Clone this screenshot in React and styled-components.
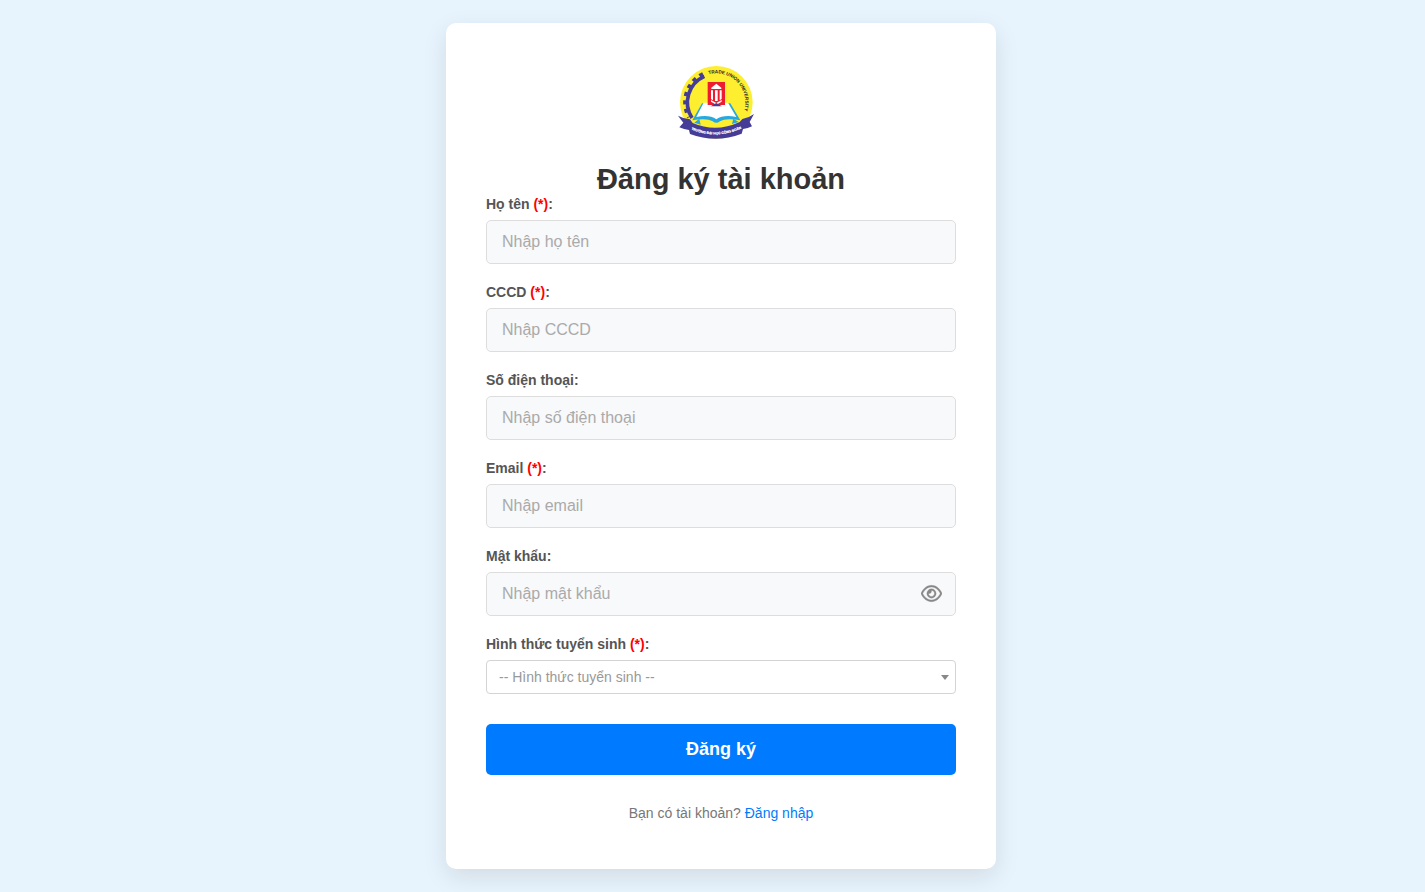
import React, { useState } from "react";
import styled, { createGlobalStyle } from "styled-components";
import { FaRegEye } from "react-icons/fa6";

const GlobalStyle = createGlobalStyle`
  *, *::before, *::after { box-sizing: border-box; }
  body {
    margin: 0;
    background: #e8f4fd;
    font-family: "Liberation Sans", Arial, sans-serif;
  }
  input, select, button { font-family: inherit; }
`;

const Page = styled.main`
  min-height: 100vh;
  display: flex;
  align-items: center;
  justify-content: center;
  padding: 20px 0 20px 17px;
`;

const Card = styled.form`
  width: 100%;
  max-width: 550px;
  padding: 40px 40px 48px;
  background: #fff;
  border-radius: 10px;
  box-shadow: 0 8px 24px rgba(0, 0, 0, 0.1);
`;

const LogoRow = styled.div`
  display: flex;
  justify-content: center;
  padding: 2px 10px 23px 0;
`;

const LogoSvg = styled.svg`
  display: block;
  width: 76px;
  height: 74px;
`;

const Title = styled.h1`
  margin: 0;
  color: #333;
  font-size: 29px;
  line-height: 34px;
  text-align: center;
`;

const Field = styled.div`
  display: flex;
  flex-direction: column;
  gap: 8px;
  margin-bottom: ${(p) => (p.$last ? "30px" : "20px")};
`;

const Label = styled.label`
  color: #555;
  font-size: 14px;
  font-weight: 700;
  line-height: 16px;
`;

const Required = styled.span`
  color: #f00;
`;

const Control = styled.div`
  position: relative;
`;

const Input = styled.input`
  display: block;
  width: 100%;
  height: 44px;
  padding: 0 15px;
  border: 1px solid #ddd;
  border-radius: 5px;
  background: #f8f9fb;
  color: #333;
  font-size: 16px;
  &::placeholder { color: #aaa; opacity: 1; }
`;

const EyeButton = styled.button`
  position: absolute;
  top: 0;
  right: 14px;
  height: 42px;
  padding: 0;
  border: 0;
  background: none;
  color: #888;
  display: flex;
  align-items: center;
  cursor: pointer;
  svg { width: 21px; height: 19px; stroke: currentColor; stroke-width: 8px; }
`;

const Select = styled.select`
  display: block;
  width: 100%;
  height: 34px;
  padding: 0 24px 0 12px;
  appearance: none;
  border: 1px solid #d4d4d4;
  border-radius: 4px;
  background: #fff;
  color: #999;
  font-size: 14px;
`;

const Caret = styled.span`
  position: absolute;
  top: 15px;
  right: 7px;
  border: 4px solid transparent;
  border-top: 5px solid #888;
  border-bottom: 0;
  pointer-events: none;
`;

const Submit = styled.button`
  display: block;
  width: 100%;
  height: 51px;
  border: 0;
  border-radius: 5px;
  background: #007bff;
  color: #fff;
  font-size: 18px;
  font-weight: 700;
  cursor: pointer;
`;

const Footer = styled.p`
  margin: 30px 0 0;
  color: #777;
  font-size: 14px;
  line-height: 16px;
  text-align: center;
`;

const Link = styled.a`
  color: #007bff;
  text-decoration: none;
`;

const Logo = () => (
  <LogoSvg viewBox="24 21 228 222" role="img" aria-label="Trade Union University">
    <defs>
      <path id="ring" d="M116 49 A87 87 0 0 1 200 195" />
      <path id="ribbon" d="M60 213 Q138 247 218 210" />
    </defs>
    <circle cx="139" cy="133" r="109" fill="#fdee2f" />
    <path d="M103 55 A86 86 0 0 0 66 180" fill="none" stroke="#443c97" strokeWidth="11" />
    <path d="M99 48 A94 94 0 0 0 57 178" fill="none" stroke="#443c97" strokeWidth="12" strokeDasharray="12 13" />
    <text fontFamily="Liberation Sans" fontSize="14" fontWeight="700" fill="#222">
      <textPath href="#ring">TRADE UNION UNIVERSITY</textPath>
    </text>
    <path d="M96 136 L67 187 Q110 179 128 190 Q139 199 150 190 Q168 179 211 187 L181 136 Z" fill="#27a9df" />
    <path d="M101 134 L79 177 Q118 169 139 184 Q160 169 199 177 L174 134 Z" fill="#fff" />
    <path d="M113 72 H165 V141 H113 Z" fill="#ed1c2e" />
    <path d="M139 77 L154 89 V93 H124 V89 Z" fill="#fff" />
    <path d="M123 97 h6 v30 l-6 -4 Z M135 97 h8 v32 h-8 Z M149 97 h6 v26 l-6 4 Z" fill="#fff" />
    <path d="M123 126 L139 135 L155 126 V131 L139 140 L123 131 Z" fill="#fff" />
    <path d="M122 145 L139 135 L156 145 Z" fill="#443c97" />
    <path d="M24 173 Q38 181 60 184 L68 195 Q138 225 209 192 L217 183 Q238 179 252 168 L239 192 L246 205 Q230 213 219 213 L215 227 Q138 257 60 228 L57 216 Q42 215 28 208 L40 194 Z" fill="#443c97" />
    <path d="M73 194 L88 182 L92 200 Z M186 198 L190 182 L206 192 Z" fill="#27a9df" />
    <text fontFamily="Liberation Sans" fontSize="10" fontWeight="700" fill="#fff" stroke="#fff" strokeWidth="0.6">
      <textPath href="#ribbon" startOffset="50%" textAnchor="middle">TRƯỜNG ĐẠI HỌC CÔNG ĐOÀN</textPath>
    </text>
  </LogoSvg>
);

const TextField = ({ id, label, required, visibleToggle, ...rest }) => {
  const [shown, setShown] = useState(false);
  return (
    <Field>
      <Label htmlFor={id}>
        {label}
        {required && <Required> (*)</Required>}:
      </Label>
      <Control>
        <Input id={id} name={id} {...rest} type={visibleToggle && shown ? "text" : rest.type} />
        {visibleToggle && (
          <EyeButton type="button" aria-label="Hiện mật khẩu" onClick={() => setShown(!shown)}>
            <FaRegEye />
          </EyeButton>
        )}
      </Control>
    </Field>
  );
};

export default function App() {
  return (
    <>
      <GlobalStyle />
      <Page>
        <Card onSubmit={(e) => e.preventDefault()}>
          <LogoRow>
            <Logo />
          </LogoRow>
          <Title>Đăng ký tài khoản</Title>
          <TextField id="name" label="Họ tên" required type="text" placeholder="Nhập họ tên" />
          <TextField id="cccd" label="CCCD" required type="text" placeholder="Nhập CCCD" />
          <TextField id="phone" label="Số điện thoại" type="tel" placeholder="Nhập số điện thoại" />
          <TextField id="email" label="Email" required type="email" placeholder="Nhập email" />
          <TextField id="password" label="Mật khẩu" type="password" placeholder="Nhập mật khẩu" visibleToggle />
          <Field $last>
            <Label htmlFor="method">
              Hình thức tuyển sinh<Required> (*)</Required>:
            </Label>
            <Control>
              <Select id="method" name="method" defaultValue="">
                <option value="">-- Hình thức tuyển sinh --</option>
              </Select>
              <Caret />
            </Control>
          </Field>
          <Submit type="submit">Đăng ký</Submit>
          <Footer>
            Bạn có tài khoản? <Link href="#login">Đăng nhập</Link>
          </Footer>
        </Card>
      </Page>
    </>
  );
}
